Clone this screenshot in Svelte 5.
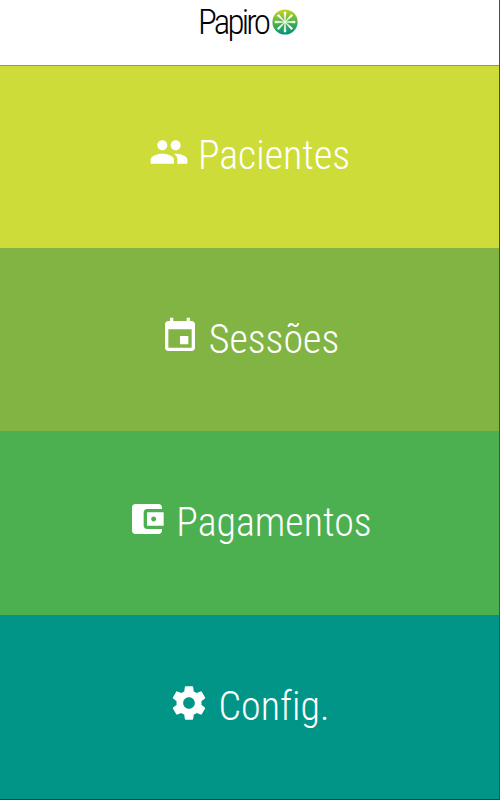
<script lang="ts">
  const items = [
    {
      id: 'pacientes',
      label: 'Pacientes',
      icon: 'M16 11c1.66 0 2.99-1.34 2.99-3S17.66 5 16 5c-1.66 0-3 1.34-3 3s1.34 3 3 3zm-8 0c1.66 0 2.99-1.34 2.99-3S9.66 5 8 5C6.34 5 5 6.34 5 8s1.34 3 3 3zm0 2c-2.33 0-7 1.17-7 3.5V19h14v-2.5c0-2.33-4.67-3.5-7-3.5zm8 0c-.29 0-.62.02-.97.05 1.16.84 1.97 1.97 1.97 3.45V19h6v-2.5c0-2.33-4.67-3.5-7-3.5z'
    },
    {
      id: 'sessoes',
      label: 'Sessões',
      icon: 'M17 12h-5v5h5v-5zM16 1v2H8V1H6v2H5c-1.11 0-1.99.9-1.99 2L3 19c0 1.1.89 2 2 2h14c1.1 0 2-.9 2-2V5c0-1.1-.9-2-2-2h-1V1h-2zm3 18H5V8h14v11z'
    },
    {
      id: 'pagamentos',
      label: 'Pagamentos',
      icon: 'M21 18v1c0 1.1-.9 2-2 2H5c-1.11 0-2-.9-2-2V5c0-1.1.89-2 2-2h14c1.1 0 2 .9 2 2v1h-9c-1.11 0-2 .9-2 2v8c0 1.1.89 2 2 2h9zm-9-2h10V8H12v8zm4-2.5c-.83 0-1.5-.67-1.5-1.5s.67-1.5 1.5-1.5 1.5.67 1.5 1.5-.67 1.5-1.5 1.5z'
    },
    {
      id: 'config',
      label: 'Config.',
      icon: 'M19.43 12.98c.04-.32.07-.64.07-.98s-.03-.66-.07-.98l2.11-1.65c.19-.15.24-.42.12-.64l-2-3.46c-.12-.22-.39-.3-.61-.22l-2.49 1c-.52-.4-1.08-.73-1.69-.98l-.38-2.65C14.46 2.18 14.25 2 14 2h-4c-.25 0-.46.18-.49.42l-.38 2.65c-.61.25-1.17.59-1.69.98l-2.49-1c-.23-.09-.49 0-.61.22l-2 3.46c-.13.22-.07.49.12.64l2.11 1.65c-.04.32-.07.65-.07.98s.03.66.07.98l-2.11 1.65c-.19.15-.24.42-.12.64l2 3.46c.12.22.39.3.61.22l2.49-1c.52.4 1.08.73 1.69.98l.38 2.65c.03.24.24.42.49.42h4c.25 0 .46-.18.49-.42l.38-2.65c.61-.25 1.17-.59 1.69-.98l2.49 1c.23.09.49 0 .61-.22l2-3.46c.12-.22.07-.49-.12-.64l-2.11-1.65zM12 15.5c-1.93 0-3.5-1.57-3.5-3.5s1.57-3.5 3.5-3.5 3.5 1.57 3.5 3.5-1.57 3.5-3.5 3.5z'
    }
  ];
  const rays = [0, 45, 90, 135, 180, 225, 270, 315];
</script>

<div class="app">
  <header>
    <h1>Papiro</h1>
    <svg class="logo" viewBox="0 0 26 26" aria-hidden="true">
      <defs>
        <linearGradient id="lime" x1="0.45" y1="0" x2="0.55" y2="1">
          <stop offset="0" stop-color="#cdd61a" />
          <stop offset="0.5" stop-color="#4fb548" />
          <stop offset="1" stop-color="#00917f" />
        </linearGradient>
      </defs>
      <circle cx="13" cy="13" r="12.6" fill="url(#lime)" />
      {#each rays as angle (angle)}
        <path d="M13 13L12 3h2z" fill="#fff" stroke="#fff" stroke-width=".5" transform="rotate({angle} 13 13)" />
      {/each}
    </svg>
  </header>
  <nav>
    {#each items as item (item.id)}
      <button class={item.id}>
        <svg class="icon" viewBox="0 0 24 24" aria-hidden="true"><path d={item.icon} /></svg>
        <span>{item.label}</span>
      </button>
    {/each}
  </nav>
</div>

<style>
  :global(body) {
    margin: 0;
  }
  .app {
    box-sizing: border-box;
    height: 800px;
    display: flex;
    flex-direction: column;
    border-right: 1px solid #44524a;
    border-bottom: 1px solid #07514c;
    background: #fff;
    font-family: 'Roboto Condensed', Roboto, sans-serif;
    font-stretch: 75%;
    font-variant-ligatures: none;
  }
  header {
    box-sizing: border-box;
    height: 66px;
    padding-top: 2px;
    display: flex;
    justify-content: center;
    align-items: flex-start;
    gap: 4px;
    border-bottom: 1px solid #95a42a;
  }
  h1 {
    margin: 0 0 0 -3px;
    font-size: 35px;
    line-height: 41px;
    font-weight: 300;
    letter-spacing: -2.8px;
    color: #000;
  }
  .logo {
    width: 26px;
    height: 26px;
    margin-top: 7px;
  }
  nav {
    flex: 1;
    display: grid;
    grid-template-rows: 182px 183px 184px 1fr;
  }
  button {
    display: flex;
    align-items: center;
    justify-content: center;
    gap: 9px;
    margin: 0;
    padding: 0 0 2px;
    border: 0;
    color: #fff;
    font: inherit;
    font-size: 40px;
    font-weight: 300;
    font-variant-ligatures: none;
  }
  .icon {
    width: 40px;
    height: 40px;
    margin-bottom: 7px;
    fill: currentColor;
  }
  .pacientes {
    padding-bottom: 4px;
    background: #cddc39;
  }
  .sessoes {
    padding-bottom: 1px;
    background: #82b444;
  }
  .pagamentos {
    background: #4caf50;
  }
  .config {
    background: #009587;
  }
</style>
